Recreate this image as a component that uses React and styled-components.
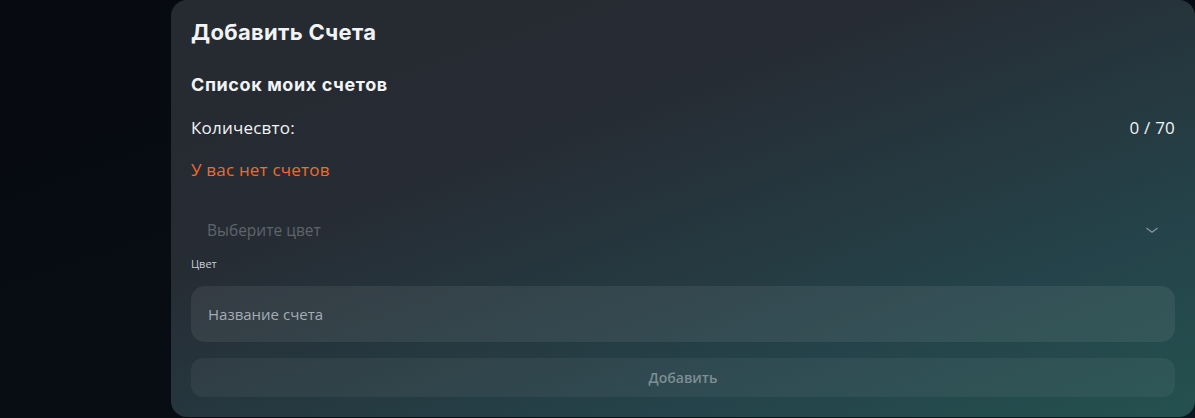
import React from 'react'
import styled, { createGlobalStyle } from 'styled-components'

const Global = createGlobalStyle`
  html, body { margin: 0; padding: 0; }
  body {
    width: 1195px;
    height: 418px;
    overflow: hidden;
    background: linear-gradient(160deg, #070a10 0%, #080d15 70%, #0a1620 100%);
    font-family: "Open Sans", "Noto Sans", sans-serif;
  }
`

const Page = styled.div`
  display: flex;
  padding-left: 171px;
  height: 418px;
  box-sizing: border-box;
`

const Card = styled.section`
  flex: 1;
  height: 417px;
  box-sizing: border-box;
  padding: 14px 20px 20px 20px;
  border-radius: 16px;
  background: linear-gradient(160deg, #262a31 0%, #262c34 35%, #25434a 75%, #24514f 100%);
  color: #f2f3f5;
  display: flex;
  flex-direction: column;
`

const Title = styled.h1`
  margin: 0;
  font-family: "Inter", sans-serif;
  font-size: 22px;
  font-weight: 700;
  line-height: 36px;
  letter-spacing: 0.3px;
`

const Subtitle = styled.h2`
  margin: 20px 0 0;
  font-family: "Inter", sans-serif;
  font-size: 18px;
  font-weight: 700;
  line-height: 30px;
  letter-spacing: 0.6px;
`

const Row = styled.div`
  display: flex;
  justify-content: space-between;
  align-items: center;
  margin-top: 16px;
  font-size: 17px;
  line-height: 24px;
  letter-spacing: 0.2px;
`

const Empty = styled.p`
  margin: 18px 0 0;
  font-size: 17px;
  line-height: 24px;
  letter-spacing: 0.2px;
  color: #f26a2a;
`

const Select = styled.div`
  display: flex;
  justify-content: space-between;
  align-items: center;
  height: 46px;
  margin-top: 25px;
  padding: 0 16px;
  font-size: 15.5px;
  color: #5e646c;
`

const Label = styled.span`
  margin-top: 5px;
  font-size: 11px;
  line-height: 14px;
  color: #c9cdd2;
`

const Input = styled.div`
  display: flex;
  align-items: center;
  height: 56px;
  margin-top: 15px;
  padding: 0 17px;
  border-radius: 14px;
  background: rgba(255, 255, 255, 0.07);
  font-size: 15px;
  color: #a4acb4;
`

const Button = styled.button`
  height: 40px;
  margin-top: 16px;
  border: none;
  border-radius: 12px;
  background: rgba(255, 255, 255, 0.05);
  font-family: "Open Sans", sans-serif;
  font-size: 14px;
  font-weight: 600;
  color: #7d8e94;
`

const Chevron = () => (
  <svg width="14" height="14" viewBox="0 0 24 24" fill="none" stroke="#8c959c" strokeWidth="2" strokeLinecap="round" strokeLinejoin="round">
    <path d="M3 9l9 7 9-7" />
  </svg>
)

export default function App() {
  return (
    <Page>
      <Global />
      <Card>
        <Title>Добавить Счета</Title>
        <Subtitle>Список моих счетов</Subtitle>
        <Row>
          <span>Количесвто:</span>
          <span>0 / 70</span>
        </Row>
        <Empty>У вас нет счетов</Empty>
        <Select>
          <span>Выберите цвет</span>
          <Chevron />
        </Select>
        <Label>Цвет</Label>
        <Input>Название счета</Input>
        <Button>Добавить</Button>
      </Card>
    </Page>
  )
}
